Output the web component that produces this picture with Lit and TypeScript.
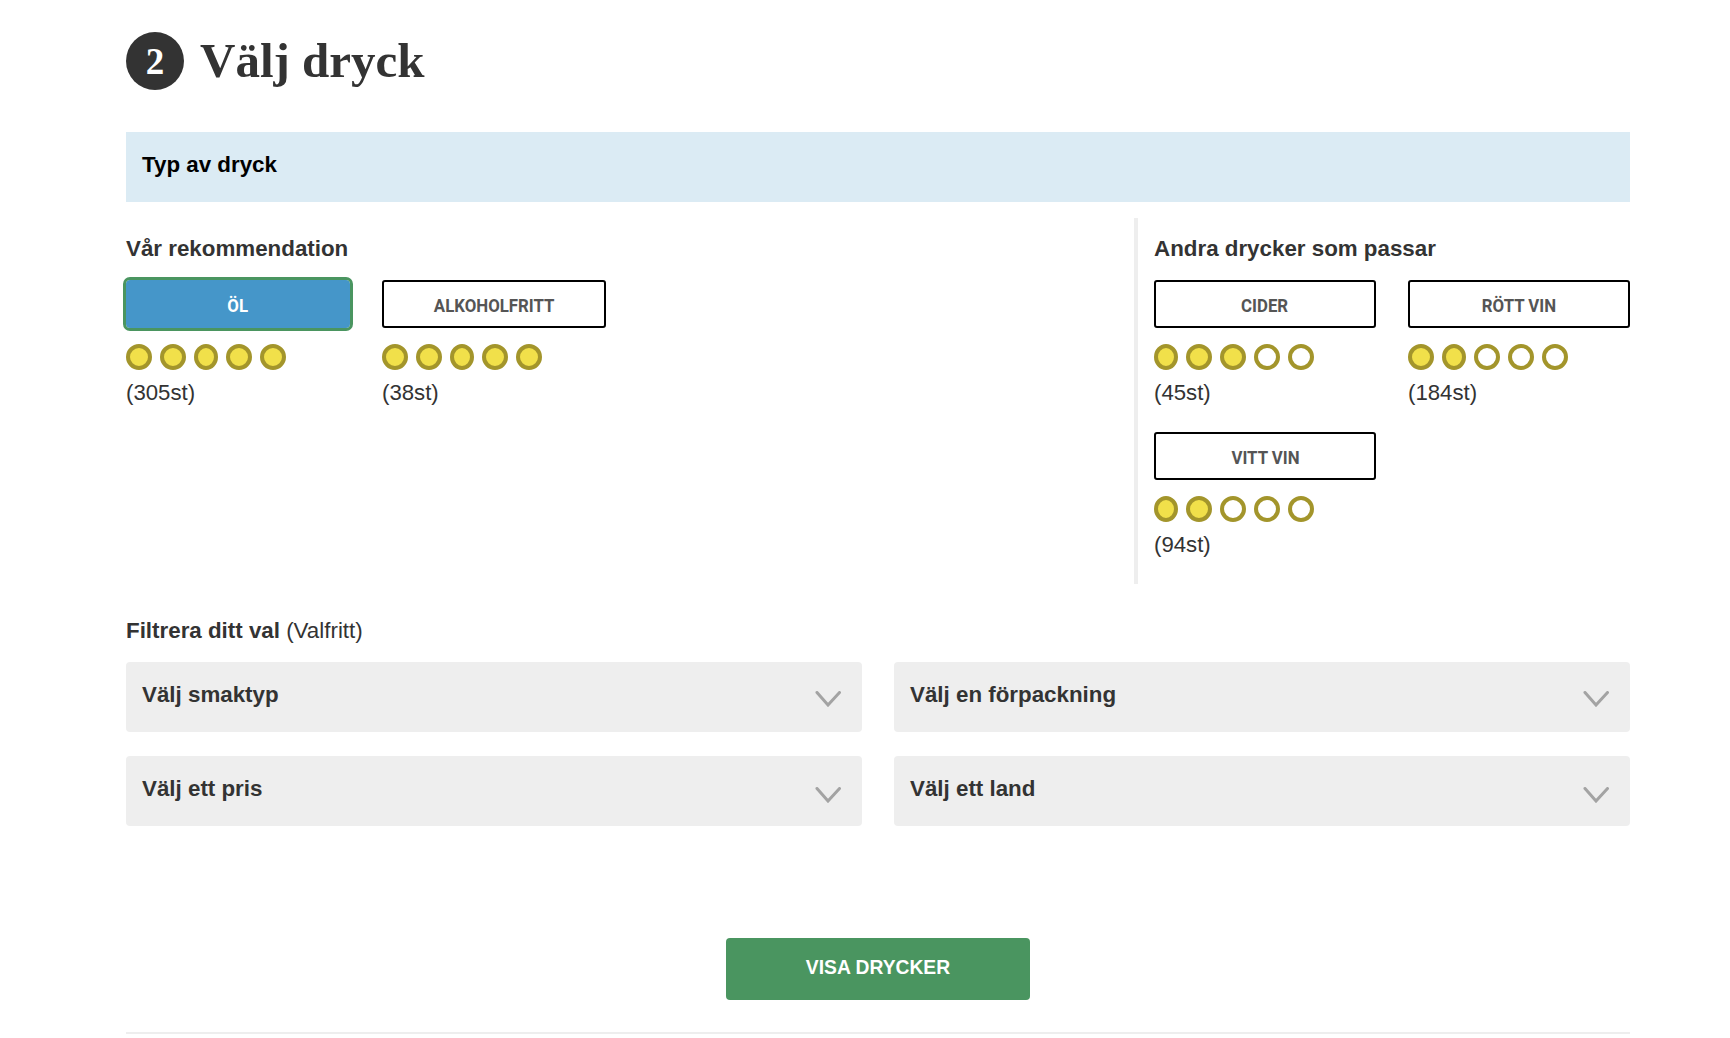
import { LitElement, html, css } from "lit";
import { customElement } from "lit/decorators.js";

type Drink = { name: string; score: number; count: number; narrow: number; active?: boolean };

const primary: Drink[] = [
  { name: "ÖL", score: 5, count: 305, narrow: 3, active: true },
  { name: "ALKOHOLFRITT", score: 5, count: 38, narrow: 3 },
];
const others: Drink[] = [
  { name: "CIDER", score: 3, count: 45, narrow: 1 },
  { name: "RÖTT VIN", score: 2, count: 184, narrow: 2 },
  { name: "VITT VIN", score: 2, count: 94, narrow: 1 },
];

@customElement("app-root")
export class AppRoot extends LitElement {
  static styles = css`
    :host {
      display: block;
      width: 1730px;
      box-sizing: border-box;
      padding: 32px 100px 0 126px;
      background: #fff;
      color: #333;
      font-family: "Liberation Sans", Arial, sans-serif;
      font-size: 22.35px;
      line-height: 26px;
    }
    .head { display: flex; align-items: center; gap: 16px; height: 58px; }
    .num {
      width: 58px; height: 58px; border-radius: 50%;
      background: #333; color: #fff;
      display: flex; align-items: center; justify-content: center;
      font: bold 37px/1 "Liberation Serif", serif;
    }
    h1 {
      margin: 0;
      font: bold 49px/58px "Liberation Serif", serif;
      color: #333;
    }
    .bar {
      margin-top: 42px; height: 70px; box-sizing: border-box;
      padding: 20px 16px 0;
      background: #dbebf4; color: #000; font-weight: bold;
    }
    .cols { display: flex; margin-top: 16px; height: 366px; }
    .left { width: 1008px; padding-top: 18px; box-sizing: border-box; }
    .right { width: 496px; box-sizing: border-box; padding: 18px 0 0 16px; border-left: 4px solid #eee; }
    h2 { margin: 0; font-size: 22.35px; line-height: 26px; font-weight: bold; color: #333; }
    .items-left { display: flex; gap: 32px; margin-top: 18px; }
    .items-left app-drink { width: 224px; }
    .items-right { display: grid; grid-template-columns: 222px 222px; column-gap: 32px; row-gap: 26px; margin-top: 18px; }
    .filter { margin-top: 34px; font-weight: bold; }
    .filter span { font-weight: normal; }
    .selects { display: grid; grid-template-columns: 736px 736px; gap: 24px 32px; margin-top: 18px; }
    .select {
      height: 70px; box-sizing: border-box; padding: 20px 21px 0 16px;
      background: #eee; border-radius: 4px;
      display: flex; justify-content: space-between; align-items: flex-start;
      font-weight: bold;
    }
    .select svg { display: block; margin-top: 9px; }
    .select.low svg { margin-top: 11px; }
    .actions { display: flex; justify-content: center; margin-top: 112px; }
    .go {
      width: 304px; height: 62px; box-sizing: border-box; border: 0; padding: 0 0 2px;
      background: #4a9560; color: #fff; border-radius: 4px;
      font: bold 19.3px/26px "Liberation Sans", Arial, sans-serif;
    }
    .rule { margin-top: 32px; height: 2px; background: #eee; }
  `;

  private select(label: string, low = false) {
    return html`<div class="select ${low ? "low" : ""}">
      <span>${label}</span>
      <svg width="26" height="16" viewBox="0 0 26 16" fill="none" stroke="#a3a3a3" stroke-width="3" stroke-linecap="round">
        <path d="M2 1.5 L13 14 L24.5 1.5"></path>
      </svg>
    </div>`;
  }

  render() {
    return html`
      <div class="head"><div class="num">2</div><h1>Välj dryck</h1></div>
      <div class="bar">Typ av dryck</div>
      <div class="cols">
        <div class="left">
          <h2>Vår rekommendation</h2>
          <div class="items-left">
            ${primary.map((d) => html`<app-drink .drink=${d}></app-drink>`)}
          </div>
        </div>
        <div class="right">
          <h2>Andra drycker som passar</h2>
          <div class="items-right">
            ${others.map((d) => html`<app-drink .drink=${d}></app-drink>`)}
          </div>
        </div>
      </div>
      <div class="filter">Filtrera ditt val <span>(Valfritt)</span></div>
      <div class="selects">
        ${this.select("Välj smaktyp")}
        ${this.select("Välj en förpackning")}
        ${this.select("Välj ett pris", true)}
        ${this.select("Välj ett land", true)}
      </div>
      <div class="actions"><button class="go">VISA DRYCKER</button></div>
      <div class="rule"></div>
    `;
  }
}

@customElement("app-drink")
export class AppDrink extends LitElement {
  static properties = { drink: { attribute: false } };
  declare drink: Drink;

  static styles = css`
    :host { display: block; }
    .btn {
      display: flex; align-items: center; justify-content: center;
      height: 48px; box-sizing: border-box; padding-top: 3px;
      background: #fff; border: 2px solid #000; border-radius: 3px;
      color: #555; font-family: Roboto, sans-serif;
      font-weight: bold; font-size: 19px; line-height: 22px;
    }
    .btn span { display: inline-block; transform: scaleX(0.885); white-space: nowrap; }
    .btn.active {
      background: #4596c9; border-color: #4596c9; color: #fff;
      outline: 3px solid #4a9560; border-radius: 4px;
    }
    .dots { display: flex; gap: 8px; margin-top: 16px; }
    .dot {
      width: 26px; height: 26px; box-sizing: border-box;
      border: 4px solid #a3952b; border-radius: 50%; background: #fff;
    }
    .dot.on { background: #f1e04a; }
    .dots.n1 .dot:nth-child(1),
    .dots.n2 .dot:nth-child(2),
    .dots.n3 .dot:nth-child(3) { width: 24px; }
    .count { margin-top: 10px; color: #333; font-size: 22.2px; line-height: 26px; }
  `;

  render() {
    const d = this.drink;
    return html`
      <div class="btn ${d.active ? "active" : ""}"><span>${d.name}</span></div>
      <div class="dots n${d.narrow}">
        ${[1, 2, 3, 4, 5].map((i) => html`<div class="dot ${i <= d.score ? "on" : ""}"></div>`)}
      </div>
      <div class="count">(${d.count}st)</div>
    `;
  }
}
